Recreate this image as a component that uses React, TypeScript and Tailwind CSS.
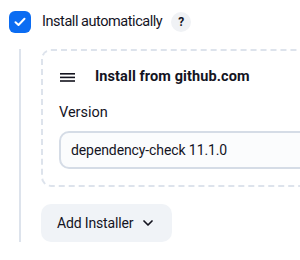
import React from "react";

export default function App() {
  return (
    <div className="w-[300px] h-[260px] overflow-hidden bg-white text-[#14141f] font-['Roboto',sans-serif]">
      <div className="flex items-center pt-[10px] pl-[9px]">
        <div className="w-[22px] h-[22px] rounded-[6px] bg-[#0b6cf2] flex items-center justify-center">
          <svg width="12" height="10" viewBox="0 0 12 10" fill="none">
            <path d="M1.5 5.2 L4.5 8 L10.5 1.8" stroke="white" strokeWidth="2" strokeLinecap="round" strokeLinejoin="round" />
          </svg>
        </div>
        <span className="ml-[11px] text-[14.5px] tracking-[-0.45px] leading-[22px] pt-[1px]">Install automatically</span>
        <span className="ml-[9px] w-[20px] h-[20px] rounded-full bg-[#f0f2f5] flex items-center justify-center text-[12px] font-bold leading-none">?</span>
      </div>
      <div className="ml-[19px] mt-[16px] border-l-2 border-[#dde3ec] pl-[20px] w-[340px]">
        <div className="border-2 border-dashed border-[#dde3ec] rounded-[10px] pl-[16px] pb-[16px]">
          <div className="flex items-center h-[50px] pt-[2px]">
            <svg width="16" height="9" viewBox="0 0 16 9" className="ml-[1px]">
              <rect x="0" y="0" width="15" height="1.6" fill="#14141f" />
              <rect x="0" y="3.6" width="15" height="1.6" fill="#14141f" />
              <rect x="0" y="7.2" width="15" height="1.6" fill="#14141f" />
            </svg>
            <span className="ml-[19px] text-[14.5px] tracking-[0.1px] font-bold">Install from github.com</span>
          </div>
          <div className="text-[14.5px] leading-[20px] mt-[2px]">Version</div>
          <div className="mt-[8px] h-[38px] border-2 border-[#d5dce6] rounded-[10px] bg-[#fbfcfd] flex items-center pl-[10px] text-[14px] tracking-[-0.1px]">
            dependency-check 11.1.0
          </div>
        </div>
        <div className="pt-[17px]">
          <div className="w-[131px] h-[38px] rounded-[10px] bg-[#f0f3f7] flex items-center pl-[16px] text-[14px] tracking-[-0.15px]">
            Add Installer
            <svg width="10" height="6" viewBox="0 0 10 6" fill="none" className="ml-[10px]">
              <path d="M1 1 L5 5 L9 1" stroke="#14141f" strokeWidth="1.7" strokeLinecap="round" strokeLinejoin="round" />
            </svg>
          </div>
        </div>
      </div>
    </div>
  );
}
